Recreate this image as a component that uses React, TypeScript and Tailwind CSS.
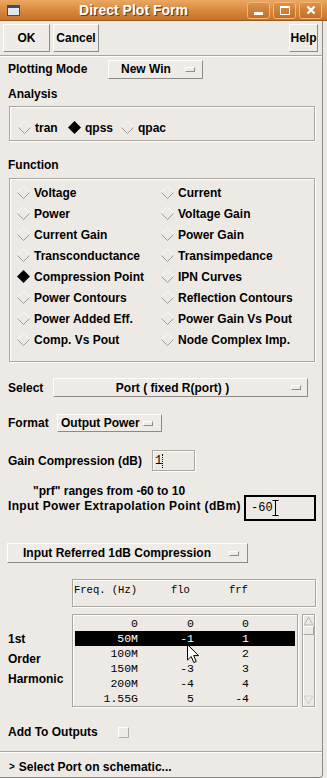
import React from 'react';

const raised = 'border border-white border-r-[#8e8b86] border-b-[#8e8b86] bg-[#efece8]';
const etched = 'border border-[#a9a6a1] shadow-[1px_1px_0_#fff,inset_1px_1px_0_#fff]';

const Diamond = ({ on }: { on?: boolean }) => (
  <svg width="15" height="15" viewBox="0 0 15 15" className="shrink-0">
    {on ? (
      <polygon points="7.5,1 14,7.5 7.5,14 1,7.5" fill="#000" />
    ) : (
      <>
        <polyline points="1,7.5 7.5,1 14,7.5" fill="none" stroke="#fbfaf8" />
        <polyline points="1.5,7.5 7.5,13.5 13.5,7.5" fill="none" stroke="#9d9a95" />
      </>
    )}
  </svg>
);

const Indicator = () => <span className="w-[10px] h-[5px] shrink-0 border border-white border-r-[#8e8b86] border-b-[#8e8b86]" />;

const Radio = ({ label, on, w }: { label: string; on?: boolean; w?: string }) => (
  <div className={`flex items-center gap-[3px] ${w ?? ''}`}>
    <Diamond on={on} />
    <span>{label}</span>
  </div>
);

const functions: [string, string][] = [
  ['Voltage', 'Current'],
  ['Power', 'Voltage Gain'],
  ['Current Gain', 'Power Gain'],
  ['Transconductance', 'Transimpedance'],
  ['Compression Point', 'IPN Curves'],
  ['Power Contours', 'Reflection Contours'],
  ['Power Added Eff.', 'Power Gain Vs Pout'],
  ['Comp. Vs Pout', 'Node Complex Imp.'],
];

const rows = [
  ['0', '0', '0'],
  ['50M', '-1', '1'],
  ['100M', '-', '2'],
  ['150M', '-3', '3'],
  ['200M', '-4', '4'],
  ['1.55G', '5', '-4'],
];

const TitleButton = ({ children }: { children: React.ReactNode }) => (
  <div className="w-[23px] h-[17px] rounded-[3px] border border-[#f2b878] bg-linear-to-b from-[#dc914a] to-[#c27026] flex items-center justify-center">
    {children}
  </div>
);

export default function App() {
  return (
    <div className="relative w-[327px] h-[778px] bg-[#edeae6] overflow-hidden font-['Liberation_Sans',Arial,sans-serif] text-[12px] font-bold text-black leading-[14px]">
      {/* title bar */}
      <div className="h-[21px] flex items-center bg-linear-to-b from-[#eaa862] via-[#d98a3e] to-[#c4732a] border-b border-[#9c5a1f]">
        <div className="ml-[7px] w-[13px] h-[11px] border border-[#3c4c78] bg-[#dfe8f2] flex flex-col">
          <div className="h-[2px] bg-[#3c4c78]" />
        </div>
        <div className="flex-1 text-center text-white text-[14px] [text-shadow:1px_1px_0_#6b3a10]">Direct Plot Form</div>
        <div className="flex gap-[3px] pr-[5px]">
          <TitleButton>
            <span className="w-[9px] h-[3px] bg-white mt-[7px]" />
          </TitleButton>
          <TitleButton>
            <span className="w-[10px] h-[9px] border border-white border-t-[2px]" />
          </TitleButton>
          <TitleButton>
            <svg width="10" height="10" viewBox="0 0 10 10">
              <path d="M1.5 1.5 L8.5 8.5 M8.5 1.5 L1.5 8.5" stroke="#fff" strokeWidth="2.4" />
            </svg>
          </TitleButton>
        </div>
      </div>

      <div className="w-[323px] h-[757px] border-r border-b border-[#8d8a85] rounded-br-[4px]">
        {/* buttons */}
        <div className="h-[34px] flex pt-[3px] px-[3px] gap-[3px]">
          <div className={`${raised} w-[47px] h-[28px] flex items-center justify-center`}>OK</div>
          <div className={`${raised} w-[46px] h-[28px] flex items-center justify-center`}>Cancel</div>
          <div className={`${raised} w-[29px] h-[28px] ml-auto mr-[1px] flex items-center justify-center`}>Help</div>
        </div>
        <div className="border-t border-[#a9a6a1] border-b border-b-white" />

        {/* plotting mode */}
        <div className="mt-[2px] h-[20px] flex items-center pl-[8px]">
          <span className="w-[100px]">Plotting Mode</span>
          <div className={`${raised} w-[95px] h-[19px] flex items-center justify-between pl-[12px] pr-[7px]`}>
            <span>New Win</span>
            <Indicator />
          </div>
        </div>

        <div className="mt-[8px] h-[14px] pl-[8px]">Analysis</div>
        <div className={`${etched} mt-[5px] ml-[9px] w-[306px] h-[35px] pt-[8px] pl-[7px] flex`}>
          <Radio label="tran" w="w-[50px]" />
          <Radio label="qpss" on w="w-[53px]" />
          <Radio label="qpac" />
        </div>

        <div className="mt-[17px] h-[14px] pl-[8px]">Function</div>
        <div className={`${etched} mt-[6px] ml-[9px] w-[306px] h-[184px] pt-[3px] pl-[6px] grid grid-cols-[144px_1fr] auto-rows-[21px]`}>
          {functions.map(([a, b]) => (
            <React.Fragment key={a}>
              <Radio label={a} on={a === 'Compression Point'} />
              <Radio label={b} />
            </React.Fragment>
          ))}
        </div>

        {/* select */}
        <div className="mt-[16px] h-[19px] flex items-center pl-[8px]">
          <span className="w-[45px]">Select</span>
          <div className={`${raised} w-[255px] h-[19px] flex items-center pr-[6px]`}>
            <span className="flex-1 text-center">Port ( fixed R(port) )</span>
            <Indicator />
          </div>
        </div>

        <div className="mt-[17px] h-[18px] flex items-center pl-[8px]">
          <span className="w-[49px]">Format</span>
          <div className={`${raised} w-[105px] h-[18px] flex items-center pl-[3px] pr-[8px] justify-between`}>
            <span>Output Power</span>
            <Indicator />
          </div>
        </div>

        <div className="mt-[18px] h-[21px] flex items-center pl-[8px]">
          <span className="w-[144px]">Gain Compression (dB)</span>
          <div className={`${etched} w-[43px] h-[21px] flex items-center pl-[2px] font-['Liberation_Mono',monospace] font-normal text-[12px]`}>
            <span>1</span>
            <span className="h-[14px] border-l border-dotted border-black" />
          </div>
        </div>

        {/* extrapolation */}
        <div className="mt-[13px] flex">
          <div className="w-[244px] pl-[8px]">
            <div className="h-[14px] pl-[25px]">"prf" ranges from -60 to 10</div>
            <div className="h-[14px] mt-[1px] tracking-[0.35px]">Input Power Extrapolation Point (dBm)</div>
          </div>
          <div className="mt-[11px] w-[72px] h-[26px] border-2 border-black flex items-center pl-[5px] font-['Liberation_Mono',monospace] font-normal text-[12px]">
            <span>-60</span>
            <svg width="7" height="16" viewBox="0 0 7 16" className="-ml-[1px]">
              <path d="M0.5 0.5 H6.5 M3.5 0.5 V15.5 M0.5 15.5 H6.5" stroke="#000" fill="none" />
            </svg>
          </div>
        </div>

        <div className={`${raised} mt-[22px] ml-[7px] w-[241px] h-[20px] flex items-center justify-between pl-[15px] pr-[8px]`}>
          <span>Input Referred 1dB Compression</span>
          <Indicator />
        </div>

        {/* table header */}
        <div className={`${etched} mt-[16px] ml-[72px] w-[244px] h-[28px] pt-[3px] pl-[1px] flex font-['Liberation_Mono',monospace] font-normal text-[10.5px]`}>
          <span className="w-[97px]">Freq. (Hz)</span>
          <span className="w-[58px]">flo</span>
          <span>frf</span>
        </div>

        {/* list */}
        <div className="mt-[7px] flex">
          <div className="w-[72px] pl-[8px] pt-[15px] leading-[20px]">
            <div>1st</div>
            <div>Order</div>
            <div>Harmonic</div>
          </div>
          <div className={`${etched} w-[226px] h-[93px] pt-[1px] px-[1px] font-['Liberation_Mono',monospace] font-normal text-[11.5px]`}>
            {rows.map((r, i) => (
              <div
                key={r[0]}
                className={`h-[15px] flex items-center mx-[1px] ${i === 1 ? 'bg-black text-white' : ''}`}
              >
                <span className="w-[63px] text-right">{r[0]}</span>
                <span className="w-[56px] text-right">{r[1]}</span>
                <span className="w-[55px] text-right">{r[2]}</span>
              </div>
            ))}
          </div>
          <div className={`${etched} ml-[4px] w-[13px] h-[93px] flex flex-col items-center`}>
            <svg width="11" height="10" viewBox="0 0 11 10" className="mt-[1px]">
              <path d="M5.5 1 L10 9 H1 Z" fill="none" stroke="#b9b6b1" />
            </svg>
            <div className="w-[11px] h-[9px] border border-[#a9a6a1] border-t-white border-l-white" />
            <div className="flex-1" />
            <svg width="11" height="10" viewBox="0 0 11 10" className="mb-[1px]">
              <path d="M5.5 9 L10 1 H1 Z" fill="none" stroke="#d0cdc8" />
            </svg>
          </div>
        </div>

        <div className="mt-[18px] h-[14px] flex items-center pl-[8px]">
          <span className="w-[110px]">Add To Outputs</span>
          <span className="w-[11px] h-[11px] border border-[#b0ada8] border-t-white border-l-white bg-[#efece8]" />
        </div>

        <div className="mt-[12px] border-t border-[#a9a6a1] border-b border-b-white" />
        <div className="mt-[7px] h-[14px] pl-[9px] flex items-center">
          <span className="text-[10px] mr-[4px]">&gt;</span>
          <span>Select Port on schematic...</span>
        </div>
      </div>

      {/* mouse pointer */}
      <svg width="14" height="21" viewBox="0 0 14 21" className="absolute left-[187px] top-[644px]">
        <path d="M0.5 0.5 V16 L4.2 12.5 L6.8 18.5 L9.2 17.5 L6.7 11.6 L11.5 11.6 Z" fill="#fff" stroke="#000" strokeLinejoin="round" />
      </svg>
    </div>
  );
}
